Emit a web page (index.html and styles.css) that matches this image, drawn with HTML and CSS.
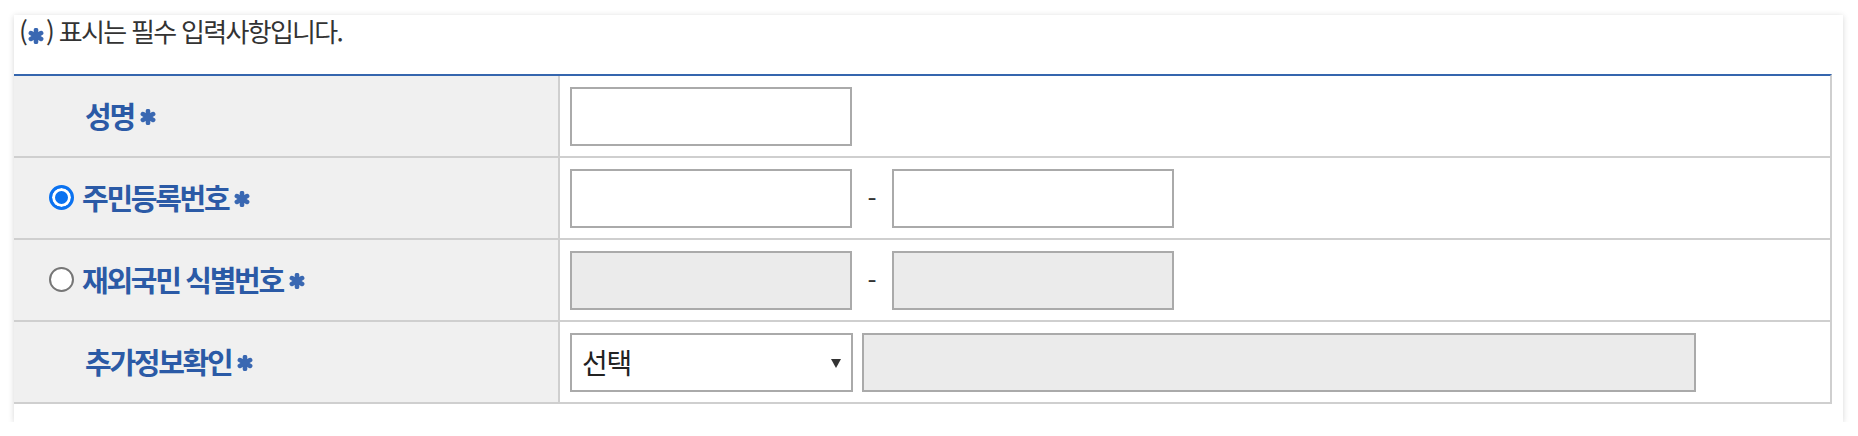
FILE: index.html
```html
<!DOCTYPE html>
<html lang="ko">
<head>
<meta charset="utf-8">
<title>필수 입력사항</title>
<link rel="stylesheet" href="styles.css">
</head>
<body>
<div class="card">
  <p class="caption">(<svg class="star star-sm" viewBox="0 0 14 14"><g><line x1="7" y1="1.8" x2="7" y2="12.2"/><line x1="2.5" y1="4.4" x2="11.5" y2="9.6"/><line x1="2.5" y1="9.6" x2="11.5" y2="4.4"/></g></svg>) 표시는 필수 입력사항입니다.</p>
  <div class="form-table">
    <div class="th plain"><span class="label">성명</span><svg class="star" viewBox="0 0 14 14"><g><line x1="7" y1="1.8" x2="7" y2="12.2"/><line x1="2.5" y1="4.4" x2="11.5" y2="9.6"/><line x1="2.5" y1="9.6" x2="11.5" y2="4.4"/></g></svg></div>
    <div class="td"><input class="field" type="text"></div>

    <div class="th radio-row"><span class="radio checked"></span><span class="label">주민등록번호</span><svg class="star" viewBox="0 0 14 14"><g><line x1="7" y1="1.8" x2="7" y2="12.2"/><line x1="2.5" y1="4.4" x2="11.5" y2="9.6"/><line x1="2.5" y1="9.6" x2="11.5" y2="4.4"/></g></svg></div>
    <div class="td"><input class="field" type="text"><span class="dash">-</span><input class="field" type="password"></div>

    <div class="th radio-row"><span class="radio"></span><span class="label">재외국민 식별번호</span><svg class="star" viewBox="0 0 14 14"><g><line x1="7" y1="1.8" x2="7" y2="12.2"/><line x1="2.5" y1="4.4" x2="11.5" y2="9.6"/><line x1="2.5" y1="9.6" x2="11.5" y2="4.4"/></g></svg></div>
    <div class="td"><input class="field disabled" type="text" disabled><span class="dash">-</span><input class="field disabled" type="text" disabled></div>

    <div class="th plain"><span class="label">추가정보확인</span><svg class="star" viewBox="0 0 14 14"><g><line x1="7" y1="1.8" x2="7" y2="12.2"/><line x1="2.5" y1="4.4" x2="11.5" y2="9.6"/><line x1="2.5" y1="9.6" x2="11.5" y2="4.4"/></g></svg></div>
    <div class="td"><div class="select-wrap"><select class="select"><option>선택</option></select></div><input class="field disabled wide" type="text" disabled></div>
  </div>
</div>
</body>
</html>
```

FILE: styles.css
```css
html, body {
  margin: 0;
  padding: 0;
  background: #ffffff;
}

body {
  font-family: "Noto Sans CJK KR", "Noto Sans", sans-serif;
  color: #333333;
}

.card {
  box-sizing: border-box;
  width: 1829px;
  height: 407px;
  margin: 15px 0 0 14px;
  background: #ffffff;
  box-shadow: 0 1px 6px rgba(0, 0, 0, 0.16);
}

.caption {
  box-sizing: border-box;
  height: 59px;
  margin: 0;
  padding: 0 0 0 5px;
  font-size: 26px;
  line-height: 32px;
  letter-spacing: -1.7px;
  color: #333333;
}

.star {
  width: 16px;
  height: 16px;
  margin: 3px 0 0 6px;
  flex: none;
  filter: blur(0.4px);
}

.star line {
  stroke: #3a68b2;
  stroke-width: 4;
  stroke-linecap: round;
}

.star-sm {
  width: 16px;
  height: 16px;
  margin: 0 2px 0 2px;
  vertical-align: -2px;
}

.form-table {
  box-sizing: border-box;
  width: 1818px;
  display: grid;
  grid-template-columns: 546px 1fr;
  border-top: 2px solid #3566ae;
  border-right: 2px solid #cfcfcf;
}

.th,
.td {
  box-sizing: border-box;
  height: 82px;
  border-bottom: 2px solid #cfcfcf;
  display: flex;
  align-items: center;
}

.th {
  background: #f0f0f0;
  border-right: 2px solid #cfcfcf;
  padding-bottom: 2px;
}

.th.plain {
  padding-left: 71px;
}

.th.radio-row {
  padding-left: 35px;
}

.label {
  font-size: 29px;
  font-weight: 700;
  letter-spacing: -2.3px;
  color: #2b5aa6;
  line-height: 32px;
}

.radio {
  box-sizing: border-box;
  width: 25px;
  height: 25px;
  margin-right: 8px;
  border-radius: 50%;
  border: 2px solid #767676;
  background: #ffffff;
  flex: none;
}

.radio.checked {
  border: 3px solid #0b72f0;
  background: #0b72f0;
  box-shadow: inset 0 0 0 3px #ffffff;
}

.td {
  padding-left: 10px;
  background: #ffffff;
}

.field {
  box-sizing: border-box;
  width: 282px;
  height: 59px;
  margin: 0;
  border: 2px solid #aaaaaa;
  background: #ffffff;
  border-radius: 0;
  padding: 0 10px;
  font-family: inherit;
  font-size: 24px;
  outline: none;
}

.field.disabled {
  background: #ebebeb;
}

.field.wide {
  width: 834px;
  margin-left: 9px;
}

.dash {
  width: 40px;
  text-align: center;
  font-size: 26px;
  color: #333333;
  line-height: 30px;
}

.select-wrap {
  position: relative;
  width: 283px;
  height: 59px;
}

.select {
  box-sizing: border-box;
  width: 283px;
  height: 59px;
  margin: 0;
  border: 2px solid #aaaaaa;
  border-radius: 0;
  background: #ffffff;
  -webkit-appearance: none;
  appearance: none;
  padding: 0 0 0 10px;
  font-family: inherit;
  font-size: 28px;
  letter-spacing: -1.2px;
  color: #222222;
  outline: none;
}

.select-wrap::after {
  content: "";
  position: absolute;
  left: 261px;
  top: 26px;
  width: 0;
  height: 0;
  border-left: 5px solid transparent;
  border-right: 5px solid transparent;
  border-top: 9px solid #333333;
  pointer-events: none;
}
```
